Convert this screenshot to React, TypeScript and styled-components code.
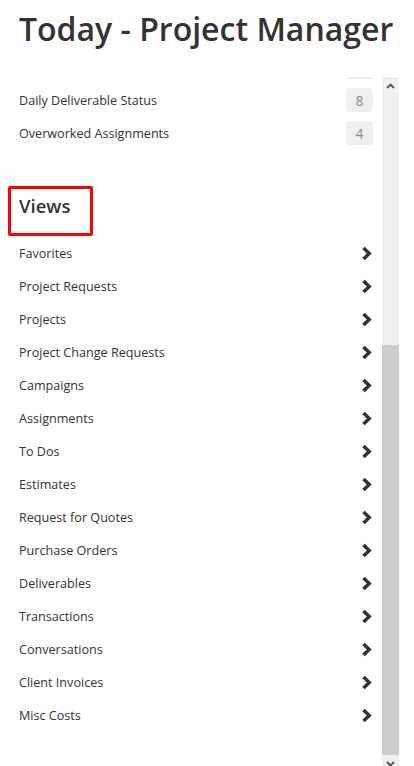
import React from 'react';
import styled, { createGlobalStyle } from 'styled-components';

interface CountItem {
  label: string;
  count: number;
}

const counts: CountItem[] = [
  { label: 'Late Deliverables', count: 2 },
  { label: 'Daily Deliverable Status', count: 8 },
  { label: 'Overworked Assignments', count: 4 },
];

const views: string[] = [
  'Favorites',
  'Project Requests',
  'Projects',
  'Project Change Requests',
  'Campaigns',
  'Assignments',
  'To Dos',
  'Estimates',
  'Request for Quotes',
  'Purchase Orders',
  'Deliverables',
  'Transactions',
  'Conversations',
  'Client Invoices',
  'Misc Costs',
];

function Chevron(): React.ReactElement {
  return (
    <svg width="11" height="15" viewBox="0 0 11 15">
      <polyline
        points="2.5,2 8.2,7.5 2.5,13"
        fill="none"
        stroke="#333"
        strokeWidth="3.5"
        strokeLinejoin="miter"
        strokeLinecap="butt"
      />
    </svg>
  );
}

function Arrow({ up }: { up: boolean }): React.ReactElement {
  return (
    <svg width="9" height="6" viewBox="0 0 9 6">
      <polyline
        points={up ? '1,5 4.5,1.5 8,5' : '1,1 4.5,4.5 8,1'}
        fill="none"
        stroke="#505050"
        strokeWidth="1.8"
      />
    </svg>
  );
}

function App(): React.ReactElement {
  return (
    <Page>
      <GlobalStyle />
      <Title>Today - Project Manager</Title>
      <Panel>
        <Scroller>
          <Inner>
            {counts.map((item) => (
              <Row key={item.label}>
                {item.label}
                <Badge>{item.count}</Badge>
              </Row>
            ))}
            <Heading>Views</Heading>
            {views.map((view) => (
              <Row key={view}>
                {view}
                <Chevron />
              </Row>
            ))}
          </Inner>
        </Scroller>
        <ScrollBar>
          <ScrollButton>
            <Arrow up />
          </ScrollButton>
          <Track>
            <Thumb $top={251} $height={410} />
          </Track>
          <ScrollButton>
            <Arrow up={false} />
          </ScrollButton>
        </ScrollBar>
      </Panel>
    </Page>
  );
}

export default App;

const GlobalStyle = createGlobalStyle`
  html, body {
    margin: 0;
    padding: 0;
    background: #fff;
    overflow: hidden;
  }
  body {
    font-family: "Open Sans", "Noto Sans", sans-serif;
    color: #333;
  }
`;

const Page = styled.div`
  width: 414px;
  height: 766px;
  overflow: hidden;
  display: flex;
  flex-direction: column;
`;

const Title = styled.h1`
  margin: 5px 0 24px 19px;
  font-size: 32px;
  font-weight: 600;
  line-height: 48px;
  color: #333;
  white-space: nowrap;
`;

const Panel = styled.div`
  display: flex;
  width: 399px;
  height: 695px;
  flex-shrink: 0;
`;

const Scroller = styled.div`
  flex: 1;
  overflow: hidden;
`;

const Inner = styled.div`
  margin-top: -27px;
`;

const Row = styled.div`
  box-sizing: border-box;
  height: 33px;
  padding: 1px 9px 0 19px;
  display: flex;
  align-items: center;
  justify-content: space-between;
  font-size: 12.6px;
  color: #333;
  svg {
    margin-right: 1px;
  }
`;

const Badge = styled.span`
  width: 27px;
  height: 24px;
  border-radius: 4px;
  background: #efefef;
  color: #888;
  font-size: 14px;
  display: flex;
  align-items: center;
  justify-content: center;
`;

const Heading = styled.h2`
  box-sizing: border-box;
  width: 85px;
  height: 50px;
  margin: 37px 0 0 8px;
  padding: 3px 8px 13px 8px;
  border: 3px solid #ff0000;
  border-radius: 2px;
  font-size: 18.5px;
  font-weight: 600;
  line-height: 28px;
  color: #333;
`;

const ScrollBar = styled.div`
  width: 17px;
  display: flex;
  flex-direction: column;
  background: #f0f0f0;
`;

const ScrollButton = styled.div`
  height: 17px;
  flex-shrink: 0;
  display: flex;
  align-items: center;
  justify-content: center;
`;

const Track = styled.div`
  flex: 1;
  display: flex;
  flex-direction: column;
`;

const Thumb = styled.div<{ $top: number; $height: number }>`
  margin-top: ${(p) => p.$top}px;
  height: ${(p) => p.$height}px;
  background: #cdcdcd;
`;
